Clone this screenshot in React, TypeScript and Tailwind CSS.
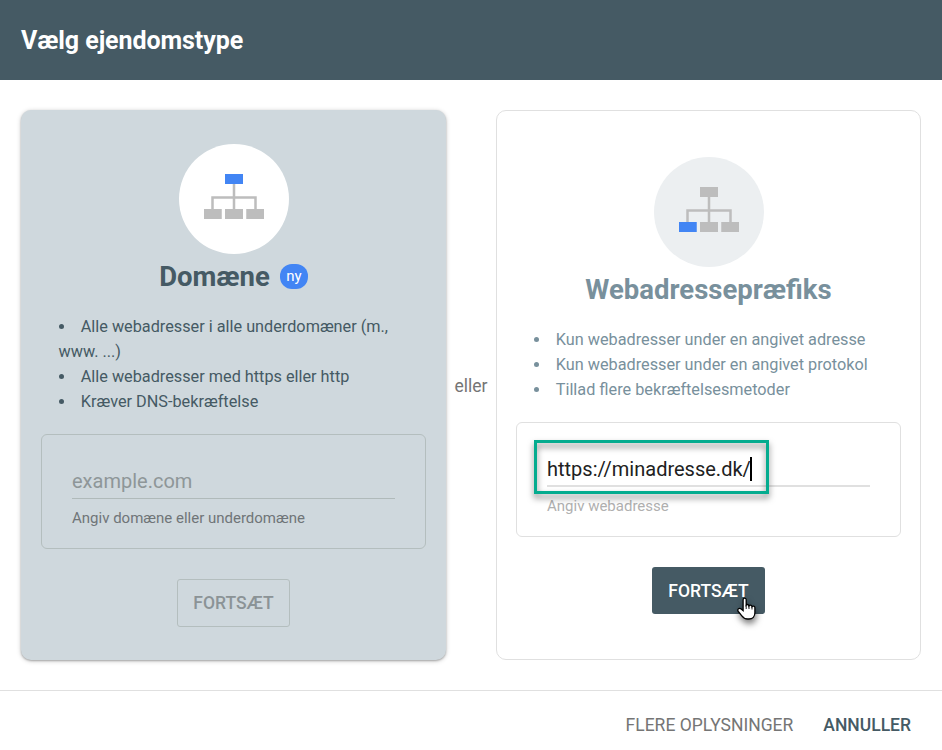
import { useState } from "react";
import clsx from "clsx";

const BLUE = "#4285f4";
const GRAY = "#bdbdbd";

function SitemapIcon({ active }: { active: "root" | "leaf" }) {
  return (
    <svg width="60" height="45" viewBox="0 0 60 45" aria-hidden="true">
      <path d="M30 10V35M8.5 35V23.5H51.5V35" fill="none" stroke={GRAY} strokeWidth="2.5" />
      <rect x="21" y="0" width="18" height="10" fill={active === "root" ? BLUE : GRAY} />
      <rect x="0" y="35" width="17.75" height="10" fill={active === "leaf" ? BLUE : GRAY} />
      <rect x="21" y="35" width="18" height="10" fill={GRAY} />
      <rect x="42.25" y="35" width="17.75" height="10" fill={GRAY} />
    </svg>
  );
}

function HandCursor() {
  return (
    <svg
      width="20"
      height="25"
      viewBox="0 0 20 25"
      className="absolute top-[30px] left-[85px] drop-shadow-[1px_4px_3px_rgba(0,0,0,0.5)]"
      aria-hidden="true"
    >
      <path
        d="M7.6 1.2C6.8 1.2 6.1 1.9 6.1 2.8V13.6L4.2 12C3.2 11.2 1.8 11.3 1.1 12.1C.5 12.9 .7 13.7 1.3 14.5L4.6 18.6C6 20.6 7.8 22 10.6 22H12C15.6 22 17.9 19.3 17.9 15.8V10.6C17.9 9.7 17.2 9.1 16.4 9.1C15.8 9.1 15.3 9.3 15 9.7C14.8 8.7 14.2 8.2 13.4 8.2C12.8 8.2 12.2 8.4 11.9 8.9C11.7 8 11.1 7.5 10.3 7.5C9.8 7.5 9.4 7.6 9.2 7.9V2.8C9.2 1.9 8.5 1.2 7.6 1.2Z"
        fill="#fff"
        stroke="#000"
        strokeWidth="1.3"
      />
      <path d="M9.2 7.9V12M12 8.9V12M15 9.7V12.5" fill="none" stroke="#000" strokeWidth="0.9" />
    </svg>
  );
}

function Punkter({ items, className }: { items: string[]; className: string }) {
  return (
    <ul className={clsx("list-inside list-disc text-[16.25px] leading-[25px]", className)}>
      {items.map((item) => (
        <li key={item}>{item}</li>
      ))}
    </ul>
  );
}

export default function App() {
  const [adresse, setAdresse] = useState("https://minadresse.dk/");

  return (
    <div className="flex h-[750px] w-[942px] flex-col overflow-hidden bg-white font-[Roboto,sans-serif]">
      <header className="flex h-20 shrink-0 items-center bg-[#455a64] px-[21px] pt-[2px]">
        <h1 className="text-[25px] leading-8 font-bold tracking-[-0.07px] text-white">Vælg ejendomstype</h1>
      </header>

      <main className="flex h-[610px] shrink-0 items-center px-[21px]">
        <section className="flex h-[550px] w-[425px] flex-col items-center rounded-[10px] bg-[#cfd8dd] px-5 pt-[34px] shadow-[0_1px_2px_rgba(0,0,0,0.25),0_1px_5px_rgba(0,0,0,0.2)]">
          <div className="flex size-[110px] shrink-0 items-center justify-center rounded-full bg-white pb-[5px]">
            <SitemapIcon active="root" />
          </div>
          <div className="flex h-[45px] items-center gap-[10px]">
            <h2 className="text-[27.5px] leading-[45px] font-bold text-[#455a64]">Domæne</h2>
            <span className="flex h-[25px] w-7 items-center justify-center rounded-[12px] bg-[#4285f4] text-[15px] text-white">
              ny
            </span>
          </div>
          <Punkter
            className="mt-[15px] w-[350px] text-[#455a64]"
            items={[
              "Alle webadresser i alle underdomæner (m., www. ...)",
              "Alle webadresser med https eller http",
              "Kræver DNS-bekræftelse",
            ]}
          />
          <div className="mt-5 h-[115px] w-full rounded-[6px] border border-[#b4bebe] px-[30px] pt-[31px]">
            <input
              placeholder="example.com"
              className="block h-[33px] w-full border-b border-[#b0baba] pb-[2px] text-[20px] outline-none placeholder:text-[#8e9698]"
            />
            <p className="mt-[9px] text-[15px] leading-5 text-[#707578]">Angiv domæne eller underdomæne</p>
          </div>
          <button
            type="button"
            disabled
            className="mt-[30px] h-12 w-[113px] rounded-[3px] border border-[#b4bebe] text-[17.5px] font-medium text-[#8b9396]"
          >
            FORTSÆT
          </button>
        </section>

        <div className="w-[50px] pt-[2px] text-center text-[17.5px] text-[#757575]">eller</div>

        <section className="flex h-[550px] w-[425px] flex-col items-center rounded-[10px] border border-[#e0e0e0] px-[19px] pt-[46px]">
          <div className="flex size-[110px] shrink-0 items-center justify-center rounded-full bg-[#eceff1] pb-[5px]">
            <SitemapIcon active="leaf" />
          </div>
          <h2 className="h-[45px] text-[27.5px] leading-[45px] font-bold text-[#78909c]">Webadressepræfiks</h2>
          <Punkter
            className="mt-[15px] w-[350px] text-[#78909c]"
            items={[
              "Kun webadresser under en angivet adresse",
              "Kun webadresser under en angivet protokol",
              "Tillad flere bekræftelsesmetoder",
            ]}
          />
          <div className="relative mt-5 h-[115px] w-full rounded-[6px] border border-[#e0e0e0] px-[30px] pt-[31px]">
            <div className="flex h-[33px] items-center border-b-2 border-[#e0e0e0] pb-[2px]">
              <input
                value={adresse}
                onChange={(e) => setAdresse(e.target.value)}
                className="w-[203px] text-[20px] text-[#212121] outline-none"
              />
              <span className="h-6 w-[2px] bg-black" />
            </div>
            <p className="mt-[9px] text-[15px] leading-5 text-[#b0b0b0]">Angiv webadresse</p>
            <div className="pointer-events-none absolute top-[17px] left-[17px] h-[54px] w-[235px] border-[3px] border-[#05ac8f] drop-shadow-[0_4px_3px_rgba(0,0,0,0.5)]" />
          </div>
          <button
            type="button"
            className="relative mt-[30px] h-[47px] w-[113px] rounded-[3px] bg-[#455a64] pt-px text-[17.5px] font-medium text-white"
          >
            FORTSÆT
            <HandCursor />
          </button>
        </section>
      </main>

      <footer className="flex h-[70px] shrink-0 items-center justify-end gap-[30px] border-t border-[#e0e0e0] pr-[31px] text-[17.5px]">
        <button type="button" className="text-[#757575]">
          FLERE OPLYSNINGER
        </button>
        <button type="button" className="font-medium text-[#455a64]">
          ANNULLER
        </button>
      </footer>
    </div>
  );
}
